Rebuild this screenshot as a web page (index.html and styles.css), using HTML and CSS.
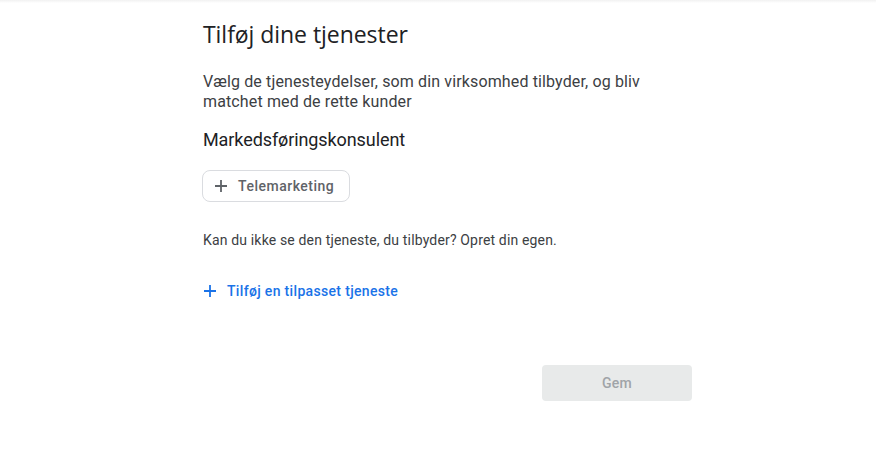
FILE: index.html
```html
<!DOCTYPE html>
<html>
  <head>
    <meta charset="utf-8">
    <link rel="stylesheet" href="styles.css">
  </head>
  <body>
    <div class="topbar"></div>
    <div class="page">
      <h1 class="title">Tilføj dine tjenester</h1>
      <p class="intro">Vælg de tjenesteydelser, som din virksomhed tilbyder, og bliv matchet med de rette kunder</p>
      <h2 class="category">Markedsføringskonsulent</h2>
      <div class="chips">
        <button class="chip">
          <svg width="14" height="14" viewBox="0 0 14 14"><path d="M7 1v12M1 7h12" stroke="#5f6368" stroke-width="1.8"/></svg>
          <span>Telemarketing</span>
        </button>
      </div>
      <p class="hint">Kan du ikke se den tjeneste, du tilbyder? Opret din egen.</p>
      <a class="add-link" href="#">
        <svg width="14" height="14" viewBox="0 0 14 14"><path d="M7 1v12M1 7h12" stroke="#1a73e8" stroke-width="1.8"/></svg>
        <span>Tilføj en tilpasset tjeneste</span>
      </a>
      <div class="actions">
        <button class="save" disabled>Gem</button>
      </div>
    </div>
  </body>
</html>
```

FILE: styles.css
```css
body {
    margin: 0;
    background: #fff;
    font-family: Roboto, "Liberation Sans", sans-serif;
    color: #3c4043;
}
.topbar {
    height: 3px;
    background: linear-gradient(#f1f1f1, #fff);
}
.page {
    width: 490px;
    margin-left: 203px;
    display: flex;
    flex-direction: column;
}
.title {
    margin: 17px 0 0;
    font-family: "Open Sans", Roboto, sans-serif;
    font-weight: 400;
    font-size: 23px;
    line-height: 28px;
    color: #202124;
    letter-spacing: -0.05px;
}
.intro {
    margin: 24px 0 0;
    font-size: 16px;
    line-height: 20px;
    color: #3c4043;
    letter-spacing: 0.13px;
    width: 470px;
}
.category {
    margin: 16px 0 0;
    font-weight: 400;
    font-size: 18px;
    line-height: 24px;
    color: #202124;
    letter-spacing: -0.09px;
}
.chips {
    margin-top: 18px;
    display: flex;
}
.chip {
    margin-left: -1px;
    height: 32px;
    display: flex;
    align-items: center;
    gap: 10px;
    padding: 0 15px 0 11px;
    border: 1px solid #dadce0;
    border-radius: 8px;
    background: #fff;
    font-family: Roboto, sans-serif;
    font-size: 14px;
    font-weight: 500;
    color: #5f6368;
    letter-spacing: 0.5px;
    cursor: pointer;
}
.hint {
    margin: 28px 0 0;
    font-size: 14px;
    line-height: 20px;
    color: #3c4043;
    letter-spacing: 0.16px;
}
.add-link {
    margin-top: 31px;
    display: flex;
    align-items: center;
    gap: 10px;
    height: 20px;
    font-size: 14px;
    font-weight: 500;
    color: #1a73e8;
    text-decoration: none;
    letter-spacing: 0.33px;
}
.actions {
    margin-top: 64px;
    display: flex;
    justify-content: flex-end;
    padding-right: 1px;
}
.save {
    width: 150px;
    height: 36px;
    border: none;
    border-radius: 4px;
    background: #e8eaea;
    color: #a0a4a8;
    font-family: Roboto, sans-serif;
    font-size: 14px;
    font-weight: 500;
    letter-spacing: 0.25px;
}
```
